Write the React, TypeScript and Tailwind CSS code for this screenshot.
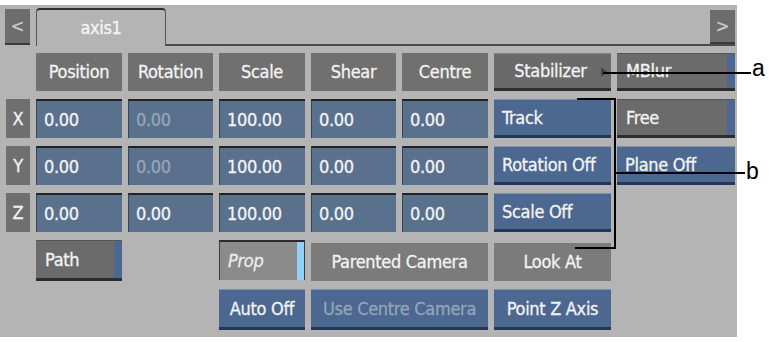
import type { ReactNode } from "react";

const font = { fontFamily: '"DejaVu Sans Condensed", "DejaVu Sans", sans-serif', fontStretch: "condensed" } as const;

const columns = ["Position", "Rotation", "Scale", "Shear", "Centre"];

const rows = [
  { axis: "X", values: ["0.00", "0.00", "100.00", "0.00", "0.00"], dim: [1], right: "Track", far: "Free" },
  { axis: "Y", values: ["0.00", "0.00", "100.00", "0.00", "0.00"], dim: [1], right: "Rotation Off", far: "Plane Off" },
  { axis: "Z", values: ["0.00", "0.00", "100.00", "0.00", "0.00"], dim: [], right: "Scale Off", far: null },
];

function Header({ children }: { children: ReactNode }) {
  return (
    <div className="flex items-center justify-center bg-[#707070] text-[#f3f3f3]">{children}</div>
  );
}

function Field({ value, dim }: { value: string; dim?: boolean }) {
  return (
    <div
      className={
        "flex items-center border-t-2 border-l border-t-[#222222] border-l-[#3a4350] bg-[#5a718e] pl-[7px] " +
        (dim ? "text-[#97a6b8]" : "text-[#f3f3f3]")
      }
    >
      {value}
    </div>
  );
}

function BlueButton({
  children,
  center,
  dim,
  className = "",
}: {
  children: ReactNode;
  center?: boolean;
  dim?: boolean;
  className?: string;
}) {
  return (
    <div
      className={
        "flex items-center border-t border-b-[3px] border-t-[#7d92b0] border-b-[#26365a] bg-[#4c6790] " +
        (center ? "justify-center " : "pl-[8px] ") +
        (dim ? "text-[#95a5ba] " : "text-[#f3f3f3] ") +
        className
      }
    >
      {children}
    </div>
  );
}

function ToggleButton({ children, className = "" }: { children: ReactNode; className?: string }) {
  return (
    <div
      className={
        "flex border-t border-b-[3px] border-t-[#555555] border-b-[#2c2c2c] bg-[#6b6b6b] text-[#f3f3f3] " + className
      }
    >
      <div className="flex flex-1 items-center pl-[9px]">{children}</div>
      <div className="w-[8px] bg-[#4c6790]" />
    </div>
  );
}

export default function App() {
  return (
    <div
      className="relative h-[342px] w-[769px] bg-white text-[18px] leading-none tracking-[-0.3px] [-webkit-text-stroke:0.3px_currentColor]"
      style={font}
    >
      <div className="mt-[5px] h-[332px] w-[737px] bg-[#b4b4b4] pt-[3px]">
        {/* tab bar */}
        <div className="flex h-[38px] items-end pl-[5px] pr-[2px]">
          <div className="mb-[1px] flex h-[36px] w-[25px] items-center justify-center border-b-2 border-b-[#3a3a3a] bg-[#6d6d6d] text-[#c9c9c9]">
            &lt;
          </div>
          <div className="ml-[6px] flex h-[38px] w-[130px] items-center justify-center rounded-t-[4px] border-x border-t-2 border-x-[#555555] border-t-[#2e2e2e] text-[#f5f5f5]">
            axis1
          </div>
          <div className="flex h-full flex-1 items-start justify-end border-b-2 border-b-[#4a4a4a]">
            <div className="mt-[2px] flex h-[34px] w-[25px] items-center justify-center border-b-2 border-b-[#3a3a3a] bg-[#6d6d6d] text-[#c9c9c9]">
              &gt;
            </div>
          </div>
        </div>

        {/* main grid */}
        <div className="mt-[7px] grid grid-cols-[24px_86px_85px_86px_85px_86px_117px_118px] grid-rows-[38px_39px_39px_39px_41px_41px] gap-x-[6px] gap-y-[8px] pl-[6px]">
          <div />
          {columns.map((c) => (
            <Header key={c}>{c}</Header>
          ))}
          <div className="relative flex items-center justify-center border-t border-b-[3px] border-t-[#868686] border-b-[#2e2e2e] bg-[#6a6a6a] pr-[4px] text-[#f3f3f3]">
            Stabilizer
            <div className="absolute right-[4px] top-[13px] h-0 w-0 border-y-[5px] border-l-[6px] border-y-transparent border-l-[#444444]" />
          </div>
          <ToggleButton>MBlur</ToggleButton>

          {rows.map((r) => (
            <div key={r.axis} className="contents">
              <div className="flex items-center justify-center bg-[#6f6f6f] text-[#f3f3f3]">{r.axis}</div>
              {r.values.map((v, i) => (
                <Field key={i} value={v} dim={r.dim.includes(i)} />
              ))}
              <BlueButton>{r.right}</BlueButton>
              {r.far === "Free" ? (
                <ToggleButton>Free</ToggleButton>
              ) : r.far ? (
                <BlueButton>{r.far}</BlueButton>
              ) : (
                <div />
              )}
            </div>
          ))}

          <div />
          <ToggleButton className="border-t-[#2a2a2a]">Path</ToggleButton>
          <div />
          <div className="mb-[1px] flex border-t-2 border-l border-r border-t-[#2a2a2a] border-l-[#3c3c3c] border-r-[#3c3c3c] bg-[#8b8b8b]">
            <div className="flex flex-1 items-center pl-[8px] italic text-[#ececec]">Prop</div>
            <div className="w-[7px] bg-[#8fd0ff]" />
          </div>
          <div className="col-span-2 mt-[3px] flex items-center justify-center bg-[#7b7b7b] text-[#f3f3f3]">
            Parented Camera
          </div>
          <div className="mt-[3px] flex items-center justify-center bg-[#7b7b7b] text-[#f3f3f3]">Look At</div>
          <div />

          <div />
          <div />
          <div />
          <BlueButton center>Auto Off</BlueButton>
          <BlueButton center dim className="col-span-2">
            Use Centre Camera
          </BlueButton>
          <BlueButton center>Point Z Axis</BlueButton>
          <div />
        </div>
      </div>

      {/* callouts */}
      <div className="absolute left-[603px] top-[67px] h-[2px] w-[148px] bg-black" />
      <div className="absolute left-[577px] top-[93px] h-[2px] w-[39px] bg-black" />
      <div className="absolute left-[614px] top-[93px] h-[151px] w-[2px] bg-black" />
      <div className="absolute left-[575px] top-[242px] h-[2px] w-[41px] bg-black" />
      <div className="absolute left-[614px] top-[167px] h-[2px] w-[131px] bg-black" />
      <div
        className="absolute left-[752px] top-[52px] text-[23px] leading-none tracking-normal text-black [-webkit-text-stroke:0px]"
        style={{ fontFamily: '"Liberation Sans", Arial, sans-serif' }}
      >
        a
      </div>
      <div
        className="absolute left-[746px] top-[155px] text-[23px] leading-none tracking-normal text-black [-webkit-text-stroke:0px]"
        style={{ fontFamily: '"Liberation Sans", Arial, sans-serif' }}
      >
        b
      </div>
    </div>
  );
}
